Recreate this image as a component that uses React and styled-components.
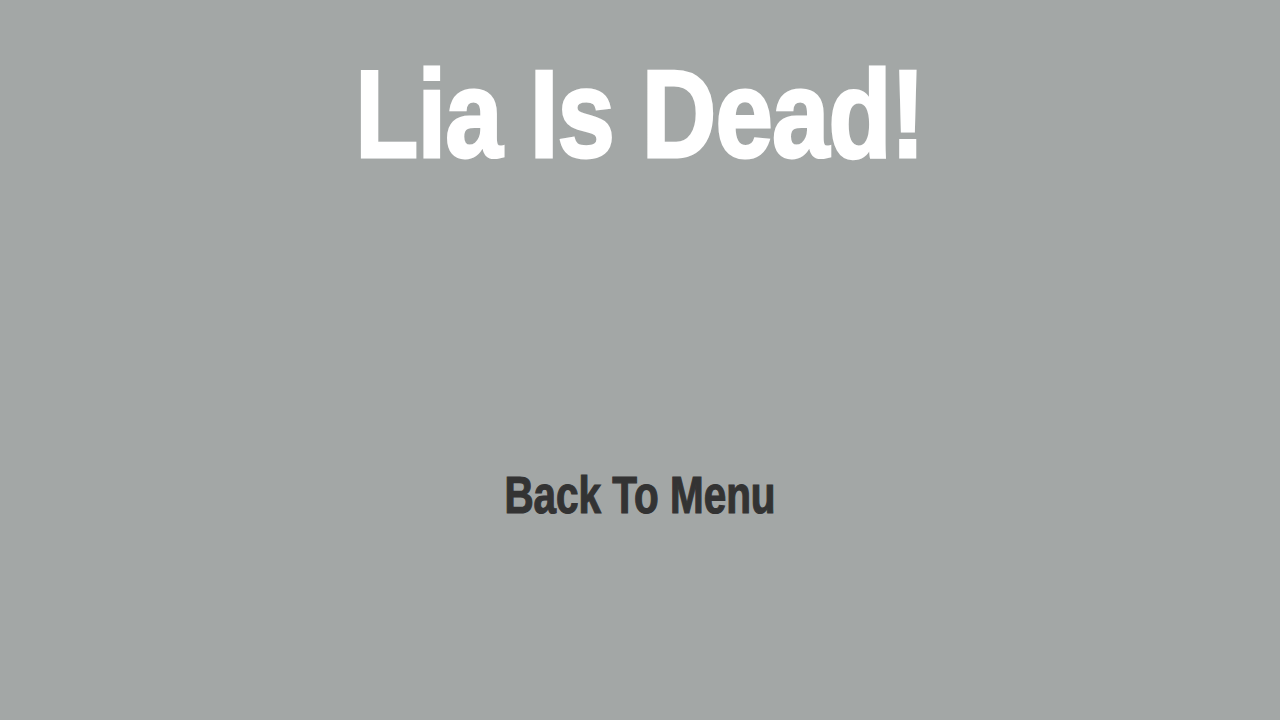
import React from "react";
import styled, { createGlobalStyle } from "styled-components";

const Global = createGlobalStyle`
  html, body { margin: 0; padding: 0; background: #a3a7a6; }
  #root { height: 720px; }
`;

const Screen = styled.div`
  width: 1280px;
  height: 720px;
  background: #a3a7a6;
  display: flex;
  flex-direction: column;
  align-items: center;
  font-family: "Liberation Sans Narrow", "Liberation Sans", sans-serif;
  font-weight: 700;
  overflow: hidden;
`;

const Title = styled.h1`
  margin: 44px 0 0;
  font-size: 125px;
  line-height: 140px;
  color: #ffffff;
  -webkit-text-stroke: 3px #ffffff;
  letter-spacing: -1px;
  transform: scaleX(0.825);
  white-space: nowrap;
`;

const MenuButton = styled.button`
  margin-top: 284px;
  background: none;
  border: none;
  padding: 0;
  cursor: pointer;
  font-family: inherit;
  font-weight: 700;
  font-size: 51px;
  line-height: 56px;
  color: #333333;
  -webkit-text-stroke: 1.2px #333333;
  letter-spacing: 0px;
  transform: scaleX(0.793);
  white-space: nowrap;
`;

export default function App() {
  return (
    <>
      <Global />
      <Screen>
        <Title>Lia Is Dead!</Title>
        <MenuButton>Back To Menu</MenuButton>
      </Screen>
    </>
  );
}
